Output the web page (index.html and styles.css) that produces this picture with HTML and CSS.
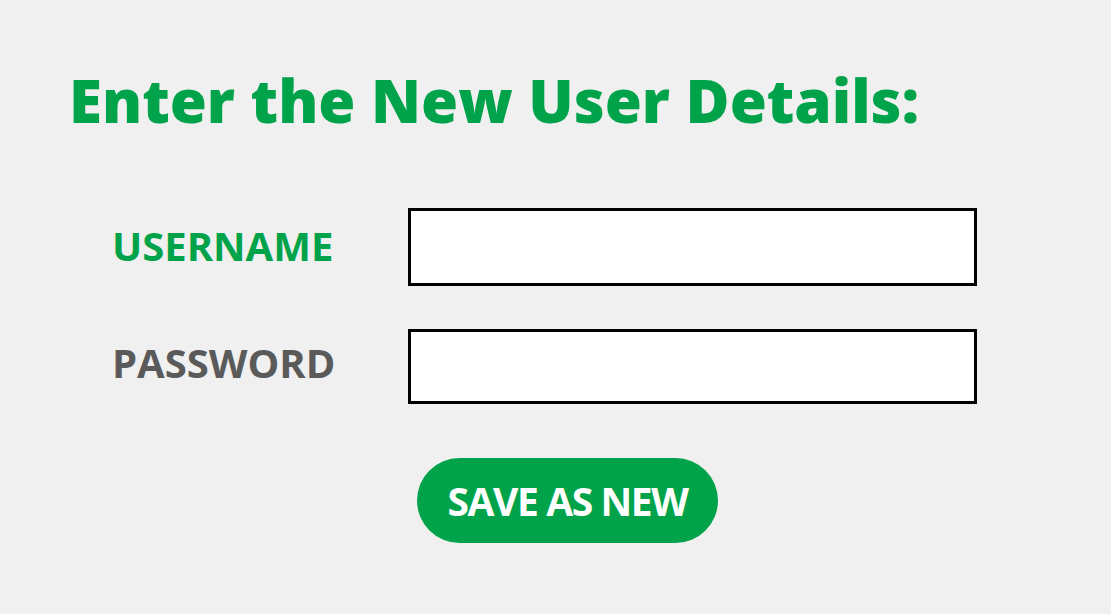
FILE: index.html
```html
<!DOCTYPE html>
<html>
<head>
<meta charset="utf-8">
<link rel="stylesheet" href="styles.css">
</head>
<body>
<div class="page">
  <h1 class="title">Enter the New User Details:</h1>
  <form class="form">
    <div class="row">
      <label class="label label-active">USERNAME</label>
      <input class="field field-1" type="text">
    </div>
    <div class="row row-2">
      <label class="label label-2">PASSWORD</label>
      <input class="field field-2" type="password">
    </div>
    <div class="actions">
      <button class="btn" type="button">SAVE AS NEW</button>
    </div>
  </form>
</div>
</body>
</html>
```
FILE: styles.css
```css
html, body {
  margin: 0;
  padding: 0;
  background: #f0f0f0;
  width: 1111px;
  height: 614px;
  overflow: hidden;
}
.page {
  padding: 64px 0 0 69px;
  font-family: "Open Sans", sans-serif;
}
.title {
  margin: 0;
  font-size: 60px;
  font-weight: 800;
  color: #00a34a;
  line-height: 72px;
}
.form {
  margin-top: 72px;
  display: flex;
  flex-direction: column;
}
.row {
  display: flex;
  align-items: center;
}
.row-2 {
  margin-top: 43px;
}
.label {
  width: 339px;
  padding-left: 43px;
  box-sizing: border-box;
  font-size: 40px;
  font-weight: 700;
  color: #5a5a5a;
  margin-bottom: 4px;
}
.label-2 {
  margin-bottom: 8px;
}
.label-active {
  color: #00a34a;
}
.field {
  width: 569px;
  height: 78px;
  box-sizing: border-box;
  border: 3px solid #000;
  background: #fff;
  margin: 0;
  padding: 0 10px;
  outline: none;
}
.field-2 {
  height: 75px;
}
.actions {
  margin-top: 54px;
  padding-left: 348px;
}
.btn {
  width: 301px;
  height: 85px;
  border: none;
  border-radius: 43px;
  background: #00a34a;
  color: #fff;
  font-family: "Open Sans", sans-serif;
  font-size: 39px;
  font-weight: 700;
  letter-spacing: -1.4px;
  padding: 0;
  cursor: pointer;
}
```
